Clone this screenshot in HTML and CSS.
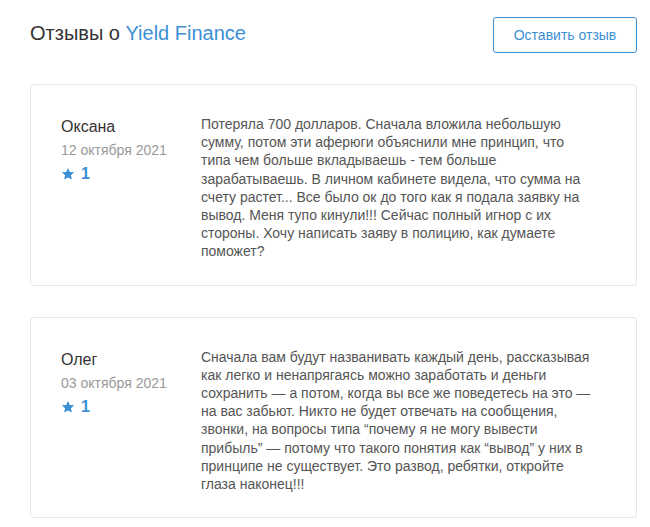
FILE: index.html
```html
<!DOCTYPE html>
<html lang="ru">
<head>
<meta charset="utf-8">
<link rel="stylesheet" href="styles.css">
</head>
<body>
<div class="page">
  <div class="header">
    <h1 class="title">Отзывы о <span class="brand">Yield Finance</span></h1>
    <button class="btn">Оставить отзыв</button>
  </div>
  <div class="card">
    <div class="meta">
      <div class="name">Оксана</div>
      <div class="date">12 октября 2021</div>
      <div class="rating"><svg class="star" viewBox="0 0 24 24" width="14" height="14"><path d="M12 1.5l3.1 6.9 7.4.8-5.5 5 1.6 7.3L12 17.8l-6.6 3.7 1.6-7.3-5.5-5 7.4-.8z"/></svg><span class="score">1</span></div>
    </div>
    <p class="text">Потеряла 700 долларов. Сначала вложила небольшую сумму, потом эти аферюги объяснили мне принцип, что типа чем больше вкладываешь - тем больше зарабатываешь. В личном кабинете видела, что сумма на счету растет... Все было ок до того как я подала заявку на вывод. Меня тупо кинули!!! Сейчас полный игнор с их стороны. Хочу написать заяву в полицию, как думаете поможет?</p>
  </div>
  <div class="card">
    <div class="meta">
      <div class="name">Олег</div>
      <div class="date">03 октября 2021</div>
      <div class="rating"><svg class="star" viewBox="0 0 24 24" width="14" height="14"><path d="M12 1.5l3.1 6.9 7.4.8-5.5 5 1.6 7.3L12 17.8l-6.6 3.7 1.6-7.3-5.5-5 7.4-.8z"/></svg><span class="score">1</span></div>
    </div>
    <p class="text">Сначала вам будут названивать каждый день, рассказывая как легко и ненапрягаясь можно заработать и деньги сохранить — а потом, когда вы все же поведетесь на это — на вас забьют. Никто не будет отвечать на сообщения, звонки, на вопросы типа “почему я не могу вывести прибыль” — потому что такого понятия как “вывод” у них в принципе не существует. Это развод, ребятки, откройте глаза наконец!!!</p>
  </div>
</div>
</body>
</html>
```
FILE: styles.css
```css
* { box-sizing: border-box; }
html, body { margin: 0; padding: 0; background: #fff; }
body { font-family: "Liberation Sans", Arial, sans-serif; color: #333; }
.page { padding: 17px 13px 0 30px; }
.header { display: flex; justify-content: space-between; align-items: flex-start; margin-bottom: 31px; }
.title { margin: 0; padding-top: 4px; font-size: 20px; line-height: 24px; font-weight: normal; color: #333; }
.brand { color: #3b8fd5; }
.btn {
  width: 144px; height: 36px; border: 1px solid #3b8fd5; border-radius: 3px;
  background: #fff; color: #3b8fd5; font-family: inherit; font-size: 14px; padding: 0;
}
.card {
  display: flex; border: 1px solid #e6e6e6; border-radius: 4px;
  padding: 30px 30px 24px 30px; margin-bottom: 31px;
}
.meta { width: 140px; flex: none; }
.name { font-size: 16px; line-height: 22px; margin-top: 1px; color: #333; }
.date { font-size: 14px; line-height: 22px; color: #999; margin-top: 1px; }
.rating { display: flex; align-items: center; gap: 6px; margin-top: 4px; color: #3b8fd5; }
.star { fill: #3b8fd5; }
.score { font-size: 16px; font-weight: bold; }
.text { margin: 0; flex: none; width: 392px; font-size: 14px; line-height: 18.2px; color: #555; }
```
